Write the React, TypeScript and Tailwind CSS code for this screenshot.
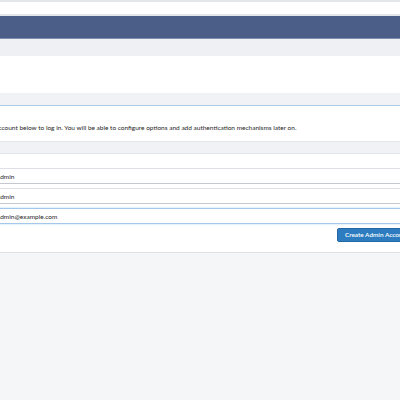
import React from 'react';

const rows = [
  { label: 'User name:', value: 'admin', type: 'text', focused: false },
  { label: 'Password:', value: 'admin', type: 'text', focused: false },
  { label: 'Email:', value: 'admin@example.com', type: 'email', focused: true },
];

export default function App() {
  return (
    <div className="w-[400px] h-[400px] overflow-hidden bg-[#f5f6f8] font-['Lato','Liberation_Sans',sans-serif] text-[#262626]">
      {/* top bar */}
      <div className="h-[16px] bg-white border-t-2 border-b-2 border-[#e4e7ea]" />
      <div className="h-[23px] bg-[#4a5e87] border-b border-[#7d8eae]" />
      <div className="h-[17px] bg-[#eef0f3]" />
      <div className="h-[37px] bg-white" />

      {/* setup block, cropped on both sides */}
      <div className="-ml-[190px] w-[640px] bg-white">
        <div className="h-[13px] bg-[#f0f2f5] border-b border-[#a9c9e6]" />
        <div className="h-[35px] pl-[137px] pt-[17px] whitespace-nowrap text-[6.5px] leading-[10px]">
          Create an admin account below to log in. You will be able to configure options and add authentication mechanisms later on.
        </div>
        <div className="h-[13px] bg-[#f0f2f5] border-t border-[#c8d9ea] border-b border-[#e3e6ea]" />

        <form className="pt-[14px] pb-[10px]">
          <div className="flex flex-col gap-[4px]">
            {rows.map((r) => (
              <div key={r.label} className="flex items-center">
                <label className="w-[181px] shrink-0 text-right pr-[10px] text-[6.5px] text-[#6b7480]">{r.label}</label>
                <input
                  readOnly
                  type={r.type}
                  value={r.value}
                  className={
                    r.focused
                      ? 'w-[440px] h-[16px] px-[5px] text-[6.5px] text-[#262626] bg-white border border-[#a5c8ea] shadow-[0_0_2px_#bcd8f2] outline-none'
                      : 'w-[440px] h-[16px] px-[5px] text-[6.5px] text-[#262626] bg-white border border-[#dde1e6] border-b-[#c4c9cf] outline-none'
                  }
                />
              </div>
            ))}
          </div>
          <div className="flex justify-start pl-[527px] mt-[4px]">
            <button
              type="button"
              className="h-[14px] px-[7px] whitespace-nowrap text-[6.4px] font-semibold text-white bg-[#2c7cbf] border border-[#2469a3] rounded-[2px]"
            >
              Create Admin Account
            </button>
          </div>
        </form>
      </div>
      <div className="border-t border-[#dde1e6]" />
    </div>
  );
}
